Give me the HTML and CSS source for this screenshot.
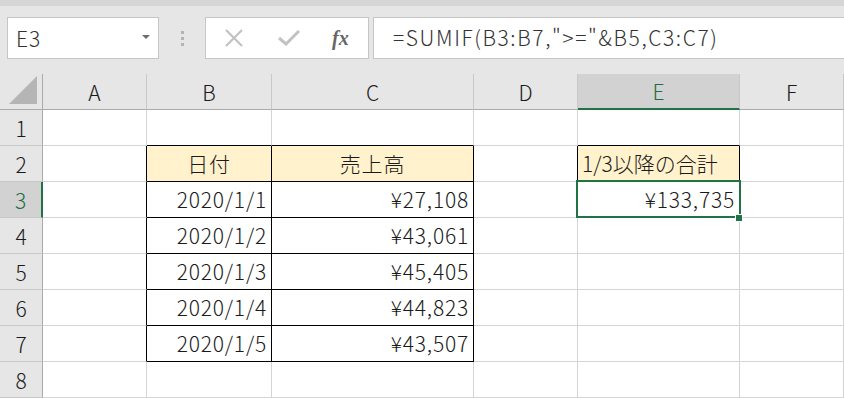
FILE: index.html
```html
<!DOCTYPE html>
<html lang="ja">
<head>
  <meta charset="UTF-8">
  <title>SUMIF</title>
  <link rel="stylesheet" href="styles.css">
</head>
<body>
  <div class="top-edge"></div>
  <div class="formula-bar">
    <div class="name-box">
      <span>E3</span>
      <svg class="caret" width="8" height="5" viewBox="0 0 8 5"><path d="M0 0H8L4 4Z" fill="#6d6d6d"/></svg>
    </div>
    <div class="grip"><i></i><i></i><i></i></div>
    <div class="fx-buttons">
      <svg width="20" height="20" viewBox="0 0 20 20"><path d="M2 2L18 18M18 2L2 18" stroke="#c2c2c2" stroke-width="2.2" fill="none"/></svg>
      <svg width="22" height="16" viewBox="0 0 22 16"><path d="M1 8L8 14L21 1" stroke="#c2c2c2" stroke-width="3" fill="none"/></svg>
      <span class="fx">fx</span>
    </div>
    <div class="formula-input">=SUMIF(B3:B7,"&gt;="&amp;B5,C3:C7)</div>
  </div>

  <div class="sheet">
    <!-- column headers -->
    <div class="corner"><svg width="29" height="29" viewBox="0 0 29 29"><path d="M28 0V28H0Z" fill="#b5b5b5"/></svg></div>
    <div class="col-head">A</div>
    <div class="col-head">B</div>
    <div class="col-head">C</div>
    <div class="col-head">D</div>
    <div class="col-head active">E</div>
    <div class="col-head">F</div>

    <!-- row 1 -->
    <div class="row-head">1</div>
    <div class="cell"></div>
    <div class="cell b-bottom"></div>
    <div class="cell b-bottom"></div>
    <div class="cell"></div>
    <div class="cell b-bottom"></div>
    <div class="cell"></div>

    <!-- row 2 -->
    <div class="row-head">2</div>
    <div class="cell b-right"></div>
    <div class="cell box head-fill center">日付</div>
    <div class="cell box head-fill center">売上高</div>
    <div class="cell b-right"></div>
    <div class="cell box head-fill left">1/3以降の合計</div>
    <div class="cell"></div>

    <!-- row 3 -->
    <div class="row-head active">3</div>
    <div class="cell b-right"></div>
    <div class="cell box num">2020/1/1</div>
    <div class="cell box num">¥27,108</div>
    <div class="cell"></div>
    <div class="cell num selected">¥133,735<span class="handle"></span></div>
    <div class="cell"></div>

    <!-- row 4 -->
    <div class="row-head">4</div>
    <div class="cell b-right"></div>
    <div class="cell box num">2020/1/2</div>
    <div class="cell box num">¥43,061</div>
    <div class="cell"></div>
    <div class="cell"></div>
    <div class="cell"></div>

    <!-- row 5 -->
    <div class="row-head">5</div>
    <div class="cell b-right"></div>
    <div class="cell box num">2020/1/3</div>
    <div class="cell box num">¥45,405</div>
    <div class="cell"></div>
    <div class="cell"></div>
    <div class="cell"></div>

    <!-- row 6 -->
    <div class="row-head">6</div>
    <div class="cell b-right"></div>
    <div class="cell box num">2020/1/4</div>
    <div class="cell box num">¥44,823</div>
    <div class="cell"></div>
    <div class="cell"></div>
    <div class="cell"></div>

    <!-- row 7 -->
    <div class="row-head">7</div>
    <div class="cell b-right"></div>
    <div class="cell box num">2020/1/5</div>
    <div class="cell box num">¥43,507</div>
    <div class="cell"></div>
    <div class="cell"></div>
    <div class="cell"></div>

    <!-- row 8 -->
    <div class="row-head">8</div>
    <div class="cell"></div>
    <div class="cell"></div>
    <div class="cell"></div>
    <div class="cell"></div>
    <div class="cell"></div>
    <div class="cell"></div>
  </div>
</body>
</html>
```

FILE: styles.css
```css
body {
  margin: 0;
  background: #fff;
  font-family: 'Noto Sans CJK JP', 'Noto Sans', sans-serif;
  font-weight: 300;
  color: #1a1a1a;
  overflow: hidden;
}

.top-edge {
  height: 6px;
  background: #d6d6d6;
}

.formula-bar {
  height: 68px;
  background: #e6e6e6;
  display: flex;
  align-items: flex-start;
  padding-top: 11px;
  box-sizing: border-box;
}

.name-box {
  margin-left: 7px;
  width: 152px;
  height: 42px;
  box-sizing: border-box;
  background: #fff;
  border: 1px solid #c6c6c6;
  display: flex;
  align-items: center;
  justify-content: space-between;
  padding: 0 8px 0 8px;
  font-size: 21px;
  color: #333;
}

.name-box span {
  letter-spacing: 1px;
}

.caret {
  margin-top: -2px;
}

.grip {
  width: 46px;
  height: 42px;
  display: flex;
  flex-direction: column;
  align-items: center;
  justify-content: center;
  gap: 3px;
}

.grip i {
  display: block;
  width: 3px;
  height: 3px;
  background: #b3b3b3;
}

.fx-buttons {
  width: 164px;
  height: 42px;
  box-sizing: border-box;
  background: #fff;
  border: 1px solid #c6c6c6;
  display: flex;
  align-items: center;
  padding-left: 18px;
  gap: 34px;
}

.fx {
  font-family: 'Liberation Serif', serif;
  font-style: italic;
  font-weight: bold;
  font-size: 20px;
  color: #666;
  margin-left: -2px;
}

.formula-input {
  margin-left: 4px;
  flex: 1;
  height: 42px;
  box-sizing: border-box;
  background: #fff;
  border: 1px solid #c6c6c6;
  border-right: none;
  padding-left: 19px;
  font-size: 21px;
  line-height: 38px;
  letter-spacing: 1.6px;
  color: #333;
}

.sheet {
  display: grid;
  grid-template-columns: 43px 104px 125px 202px 104px 162px 1fr;
  grid-auto-rows: 36px;
  font-size: 21px;
}

.sheet > div {
  box-sizing: border-box;
}

.corner {
  background: #e6e6e6;
  border-right: 1px solid #ababab;
  border-bottom: 1px solid #ababab;
  display: flex;
  align-items: flex-end;
  justify-content: flex-end;
  padding: 0 4px 4px 0;
}

.col-head {
  background: #e6e6e6;
  border-right: 1px solid #c8c8c8;
  border-bottom: 1px solid #ababab;
  display: flex;
  align-items: center;
  justify-content: center;
}

.col-head.active {
  background: #d2d2d2;
  border-bottom: 2px solid #217346;
  color: #1f6e43;
}

.row-head {
  background: #e6e6e6;
  border-right: 1px solid #ababab;
  border-bottom: 1px solid #c8c8c8;
  display: flex;
  align-items: center;
  justify-content: center;
}

.row-head.active {
  background: #d2d2d2;
  border-right: 2px solid #217346;
  color: #1f6e43;
}

.cell {
  border-right: 1px solid #d4d4d4;
  border-bottom: 1px solid #d4d4d4;
  display: flex;
  align-items: center;
  padding: 0 4px 2px 4px;
  letter-spacing: 0.8px;
  white-space: nowrap;
}

.cell.b-right {
  border-right-color: #000;
}

.cell.b-bottom {
  border-bottom-color: #000;
}

.cell.box {
  border-right-color: #000;
  border-bottom-color: #000;
}

.head-fill {
  background: #fff2cc;
}

.center {
  justify-content: center;
}

.left {
  justify-content: flex-start;
  letter-spacing: 0;
}

.num {
  justify-content: flex-end;
}

.selected {
  position: relative;
}

.selected::after {
  content: "";
  position: absolute;
  left: -2px;
  top: -2px;
  right: -2px;
  bottom: -1px;
  border: 2px solid #217346;
}

.handle {
  position: absolute;
  right: -4px;
  bottom: -5px;
  width: 6px;
  height: 6px;
  background: #217346;
  border: 1px solid #fff;
  z-index: 2;
}
```
